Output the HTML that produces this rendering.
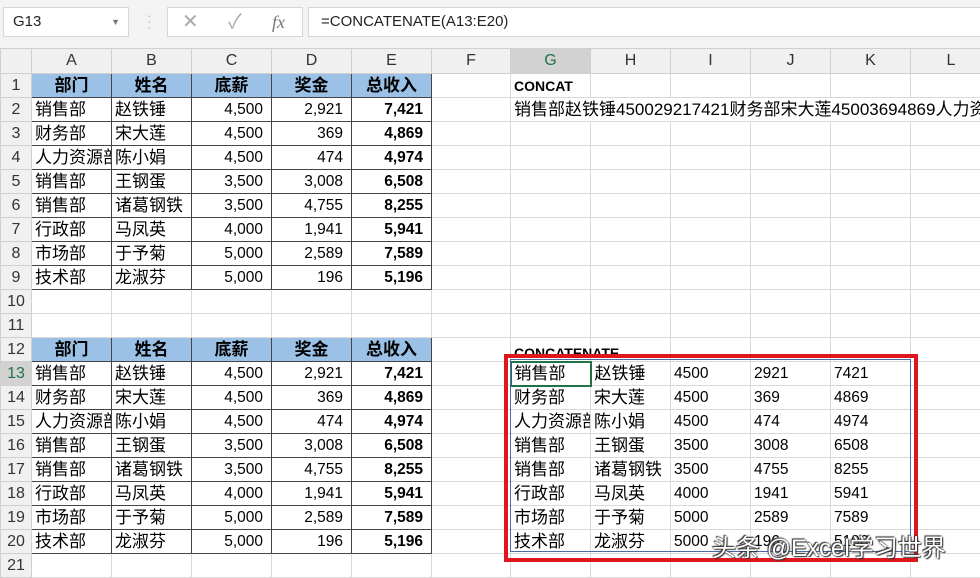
<!DOCTYPE html>
<html><head><meta charset="utf-8"><style>
body{margin:0;width:980px;height:575px;overflow:hidden;background:#fff;font-family:"Liberation Sans","Noto Sans CJK SC",sans-serif;position:relative}
.top{position:absolute;left:0;top:0;width:980px;height:48px;background:#f3f3f3}
.box{position:absolute;background:#fff;border:1px solid #d6d6d6;box-sizing:border-box;font-size:15px;color:#222}
table{position:absolute;left:0;top:48px;border-collapse:collapse;table-layout:fixed;width:991px}
tr{height:24px}
tr.ch{height:25px}
td{border:1px solid #d9d9d9;padding:0 3px;font-size:17px;white-space:nowrap;overflow:visible;line-height:20px;color:#000}
td.h{background:#f0f0f0;color:#333;text-align:center;font-size:16px;border-color:#cfcfcf;padding:0}
td.hs{background:#d2d2d2;color:#217346}
td.t{border:1px solid #444}
td.hd{background:#9bc2e6;font-weight:bold;text-align:center;border:1px solid #444}
td.n{text-align:right;font-size:15.5px;padding-right:8px}
td.nb{text-align:right;font-size:15.5px;font-weight:bold;padding-right:8px}
td.c{overflow:hidden}
td.v{font-size:15.5px}
.lbl{font-weight:bold;font-size:14px}
</style></head><body>
<div class="top"></div>
<div class="box" style="left:3px;top:7px;width:126px;height:30px;line-height:28px;padding-left:9px">G13<span style="position:absolute;right:8px;top:0;font-size:9px;color:#777">▼</span></div>
<div style="position:absolute;left:147px;top:12px;color:#bbb;font-size:14px;line-height:6px">·<br>·<br>·</div>
<div class="box" style="left:167px;top:7px;width:136px;height:30px;color:#aaa;font-size:20px;line-height:28px"><span style="position:absolute;left:14px">✕</span><span style="position:absolute;left:60px">✓</span><span style="position:absolute;left:104px;font-family:'Liberation Serif',serif;font-style:italic;font-size:18px;color:#777">fx</span></div>
<div class="box" style="left:308px;top:7px;width:680px;height:30px;line-height:28px;padding-left:12px">=CONCATENATE(A13:E20)</div>
<table>
<colgroup><col style="width:31px"><col style="width:80px"><col style="width:80px"><col style="width:80px"><col style="width:80px"><col style="width:80px"><col style="width:79px"><col style="width:80px"><col style="width:80px"><col style="width:80px"><col style="width:80px"><col style="width:80px"><col style="width:81px"></colgroup>
<tr class="ch"><td class="h"></td><td class="h">A</td><td class="h">B</td><td class="h">C</td><td class="h">D</td><td class="h">E</td><td class="h">F</td><td class="h hs">G</td><td class="h">H</td><td class="h">I</td><td class="h">J</td><td class="h">K</td><td class="h">L</td></tr>
<tr><td class="h">1</td><td class="hd">部门</td><td class="hd">姓名</td><td class="hd">底薪</td><td class="hd">奖金</td><td class="hd">总收入</td><td></td><td><span class="lbl">CONCAT</span></td><td></td><td></td><td></td><td></td><td></td></tr>
<tr><td class="h">2</td><td class="t">销售部</td><td class="t">赵铁锤</td><td class="t n">4,500</td><td class="t n">2,921</td><td class="t nb">7,421</td><td></td><td style="border-right:none"><span style="position:relative;z-index:2">销售部赵铁锤450029217421财务部宋大莲45003694869人力资</span></td><td style="border-left:none;border-right:none"></td><td style="border-left:none;border-right:none"></td><td style="border-left:none;border-right:none"></td><td style="border-left:none;border-right:none"></td><td style="border-left:none"></td></tr>
<tr><td class="h">3</td><td class="t">财务部</td><td class="t">宋大莲</td><td class="t n">4,500</td><td class="t n">369</td><td class="t nb">4,869</td><td></td><td></td><td></td><td></td><td></td><td></td><td></td></tr>
<tr><td class="h">4</td><td class="t c">人力资源部</td><td class="t">陈小娟</td><td class="t n">4,500</td><td class="t n">474</td><td class="t nb">4,974</td><td></td><td></td><td></td><td></td><td></td><td></td><td></td></tr>
<tr><td class="h">5</td><td class="t">销售部</td><td class="t">王钢蛋</td><td class="t n">3,500</td><td class="t n">3,008</td><td class="t nb">6,508</td><td></td><td></td><td></td><td></td><td></td><td></td><td></td></tr>
<tr><td class="h">6</td><td class="t">销售部</td><td class="t">诸葛钢铁</td><td class="t n">3,500</td><td class="t n">4,755</td><td class="t nb">8,255</td><td></td><td></td><td></td><td></td><td></td><td></td><td></td></tr>
<tr><td class="h">7</td><td class="t">行政部</td><td class="t">马凤英</td><td class="t n">4,000</td><td class="t n">1,941</td><td class="t nb">5,941</td><td></td><td></td><td></td><td></td><td></td><td></td><td></td></tr>
<tr><td class="h">8</td><td class="t">市场部</td><td class="t">于予菊</td><td class="t n">5,000</td><td class="t n">2,589</td><td class="t nb">7,589</td><td></td><td></td><td></td><td></td><td></td><td></td><td></td></tr>
<tr><td class="h">9</td><td class="t">技术部</td><td class="t">龙淑芬</td><td class="t n">5,000</td><td class="t n">196</td><td class="t nb">5,196</td><td></td><td></td><td></td><td></td><td></td><td></td><td></td></tr>
<tr><td class="h">10</td><td></td><td></td><td></td><td></td><td></td><td></td><td></td><td></td><td></td><td></td><td></td><td></td></tr>
<tr><td class="h">11</td><td></td><td></td><td></td><td></td><td></td><td></td><td></td><td></td><td></td><td></td><td></td><td></td></tr>
<tr><td class="h">12</td><td class="hd">部门</td><td class="hd">姓名</td><td class="hd">底薪</td><td class="hd">奖金</td><td class="hd">总收入</td><td></td><td style="vertical-align:bottom;line-height:16px"><span class="lbl">CONCATENATE</span></td><td></td><td></td><td></td><td></td><td></td></tr>
<tr><td class="h hs">13</td><td class="t">销售部</td><td class="t">赵铁锤</td><td class="t n">4,500</td><td class="t n">2,921</td><td class="t nb">7,421</td><td></td><td style="border:2px solid #217346">销售部</td><td>赵铁锤</td><td class="v">4500</td><td class="v">2921</td><td class="v">7421</td><td></td></tr>
<tr><td class="h">14</td><td class="t">财务部</td><td class="t">宋大莲</td><td class="t n">4,500</td><td class="t n">369</td><td class="t nb">4,869</td><td></td><td>财务部</td><td>宋大莲</td><td class="v">4500</td><td class="v">369</td><td class="v">4869</td><td></td></tr>
<tr><td class="h">15</td><td class="t c">人力资源部</td><td class="t">陈小娟</td><td class="t n">4,500</td><td class="t n">474</td><td class="t nb">4,974</td><td></td><td class="c">人力资源部</td><td>陈小娟</td><td class="v">4500</td><td class="v">474</td><td class="v">4974</td><td></td></tr>
<tr><td class="h">16</td><td class="t">销售部</td><td class="t">王钢蛋</td><td class="t n">3,500</td><td class="t n">3,008</td><td class="t nb">6,508</td><td></td><td>销售部</td><td>王钢蛋</td><td class="v">3500</td><td class="v">3008</td><td class="v">6508</td><td></td></tr>
<tr><td class="h">17</td><td class="t">销售部</td><td class="t">诸葛钢铁</td><td class="t n">3,500</td><td class="t n">4,755</td><td class="t nb">8,255</td><td></td><td>销售部</td><td>诸葛钢铁</td><td class="v">3500</td><td class="v">4755</td><td class="v">8255</td><td></td></tr>
<tr><td class="h">18</td><td class="t">行政部</td><td class="t">马凤英</td><td class="t n">4,000</td><td class="t n">1,941</td><td class="t nb">5,941</td><td></td><td>行政部</td><td>马凤英</td><td class="v">4000</td><td class="v">1941</td><td class="v">5941</td><td></td></tr>
<tr><td class="h">19</td><td class="t">市场部</td><td class="t">于予菊</td><td class="t n">5,000</td><td class="t n">2,589</td><td class="t nb">7,589</td><td></td><td>市场部</td><td>于予菊</td><td class="v">5000</td><td class="v">2589</td><td class="v">7589</td><td></td></tr>
<tr><td class="h">20</td><td class="t">技术部</td><td class="t">龙淑芬</td><td class="t n">5,000</td><td class="t n">196</td><td class="t nb">5,196</td><td></td><td>技术部</td><td>龙淑芬</td><td class="v">5000</td><td class="v">196</td><td class="v">5196</td><td></td></tr>
<tr><td class="h">21</td><td></td><td></td><td></td><td></td><td></td><td></td><td></td><td></td><td></td><td></td><td></td><td></td></tr>
</table>
<div style="position:absolute;left:510px;top:359px;width:401px;height:193px;border:1px solid #4a6aa8;box-sizing:border-box"></div>
<div style="position:absolute;left:504px;top:354px;width:414px;height:208px;border:4px solid #e0161e;box-sizing:border-box"></div>
<div style="position:absolute;left:712px;top:528px;font-size:24px;color:#fff;text-shadow:0 0 2px #333,1px 1px 1px #333,-1px -1px 1px #333;white-space:nowrap">头条 @Excel学习世界</div>
</body></html>
